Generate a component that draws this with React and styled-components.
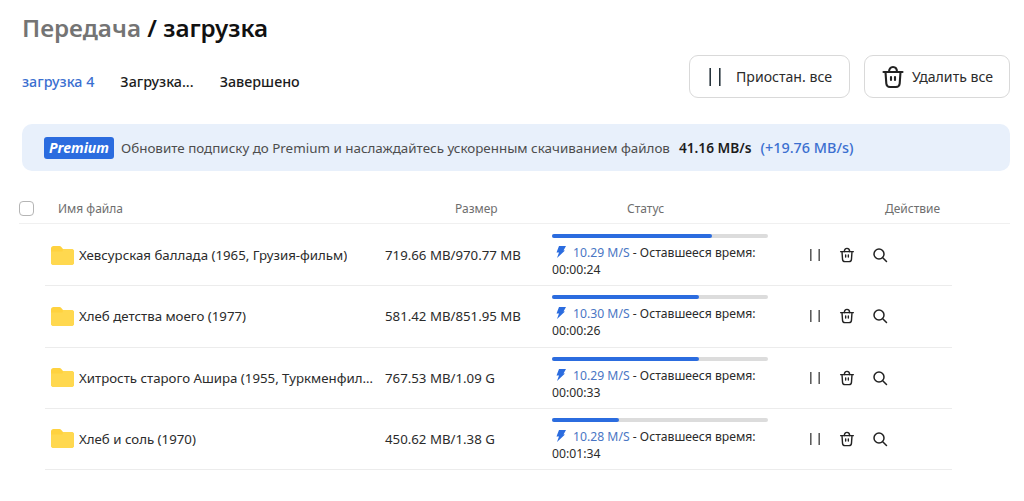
import styled, { createGlobalStyle } from 'styled-components'

const GlobalStyle = createGlobalStyle`
  html, body {
    margin: 0;
    padding: 0;
    background: #fff;
    overflow: hidden;
    font-family: "Noto Sans", "Open Sans", sans-serif;
    color: #1c1c1c;
  }
`

const Page = styled.div`
  width: 1024px;
  height: 501px;
  box-sizing: border-box;
  padding: 10px 14px 0 22px;
`

const Title = styled.h1`
  margin: 0;
  height: 34px;
  line-height: 35px;
  font-size: 24.2px;
  font-weight: 600;
  color: #111;
`

const TitleMuted = styled.span`
  color: #747474;
`

const Toolbar = styled.div`
  display: flex;
  justify-content: space-between;
  align-items: flex-start;
  margin-top: 11px;
  height: 42px;
`

const Tabs = styled.div`
  display: flex;
  gap: 26px;
  padding-top: 17px;
`

const Tab = styled.span`
  font-size: 14.3px;
  line-height: 20px;
  font-weight: 500;
  color: ${(p) => (p.$active ? '#3b6fd0' : '#1c1c1c')};
`

const Buttons = styled.div`
  display: flex;
  gap: 14px;
`

const Button = styled.button`
  display: flex;
  align-items: center;
  justify-content: center;
  gap: ${(p) => p.$gap}px;
  width: ${(p) => p.$width}px;
  height: 43px;
  padding: 0;
  background: #fff;
  border: 1px solid #d9d9d9;
  border-radius: 9px;
  font-family: inherit;
  font-size: 14.1px;
  color: #2b2b2b;
`

const Banner = styled.div`
  display: flex;
  align-items: center;
  height: 47px;
  margin-top: 27px;
  padding-left: 22px;
  background: #e8f0fb;
  border-radius: 10px;
  font-size: 13.4px;
  color: #4d4d4d;
`

const Badge = styled.span`
  width: 70px;
  height: 22px;
  line-height: 21px;
  text-align: center;
  border-radius: 3px;
  background: #2b6cdf;
  color: #fff;
  font-size: 14px;
  font-weight: 700;
  font-style: italic;
  margin-right: 7px;
`

const Speed = styled.span`
  margin-left: 9px;
  font-size: 13.7px;
  font-weight: 600;
  color: #1c1c1c;
`

const Bonus = styled.span`
  margin-left: 9px;
  font-size: 14.4px;
  font-weight: 500;
  color: #3b6fd0;
`

const HeadRow = styled.div`
  display: grid;
  grid-template-columns: 39px 397px 172px 258px auto;
  align-items: center;
  height: 53px;
  box-sizing: border-box;
  padding-top: 22px;
  margin-left: -3px;
  border-bottom: 1px solid #f0f0f0;
  font-size: 12px;
  color: #6e6e6e;
`

const Check = styled.span`
  width: 13px;
  height: 13px;
  border: 1.5px solid #b5b5b5;
  border-radius: 4px;
`

const List = styled.div`
  margin: 1px 0 0 23px;
  width: 907px;
`

const Row = styled.div`
  display: grid;
  grid-template-columns: 334px 167px 256px 1fr;
  align-items: center;
  height: 61.25px;
  box-sizing: border-box;
  border-bottom: 1px solid #ececec;
  padding-left: 6px;
  font-size: 13.25px;
  color: #2b2b2b;
`

const NameCell = styled.div`
  display: flex;
  align-items: center;
  gap: 5px;
  min-width: 0;
`

const FileName = styled.span`
  white-space: nowrap;
  overflow: hidden;
  text-overflow: ellipsis;
  max-width: 296px;
`

const StatusCell = styled.div`
  width: 216px;
  margin-top: 2px;
  font-size: 12.2px;
  line-height: 17px;
`

const Track = styled.div`
  height: 4px;
  border-radius: 2px;
  background: #dcdcdc;
  margin-bottom: 6px;
`

const Fill = styled.div`
  height: 100%;
  border-radius: 2px;
  background: #2b6cdf;
`

const Rate = styled.span`
  color: #4a76c4;
`

const Bolt = styled.svg`
  width: 11px;
  height: 12px;
  margin: 0 7px 0 3px;
  vertical-align: -1px;
`

const Actions = styled.div`
  display: flex;
  align-items: center;
  gap: 17px;
`

const PauseIcon = ({ size = 16, height = 20, color = '#555' }) => (
  <svg width={size} height={height} viewBox={`0 0 ${size} ${height}`} fill="none">
    <path d={`M${size * 0.2} 1V${height - 1}M${size * 0.8} 1V${height - 1}`} stroke={color} strokeWidth="1.5" />
  </svg>
)

const TrashIcon = ({ size = 16 }) => (
  <svg width={size} height={size} viewBox="0 0 24 24" fill="none" stroke="#222" strokeWidth="2.1" strokeLinecap="round" strokeLinejoin="round">
    <path d="M2.500 7h19" />
    <path d="M8 7c0-3 1.500-5 4-5s4 2 4 5" />
    <path d="M4.500 7l.8 11.500c.2 2 1.500 3.500 3.700 3.500h6c2.200 0 3.500-1.500 3.700-3.500L19.500 7" />
    <path d="M10 12v3M14 12v3" />
  </svg>
)

const SearchIcon = () => (
  <svg width="16" height="16" viewBox="0 0 16 16" fill="none" stroke="#222" strokeWidth="1.5" strokeLinecap="round">
    <circle cx="7" cy="7" r="5" />
    <path d="M11 11l3.500 3.500" />
  </svg>
)

const FolderIcon = () => (
  <svg width="23" height="19" viewBox="0 0 23 19">
    <path d="M0 2.500C0 1 1 0 2.500 0h6c.8 0 1.300.3 1.800.9L12 3h8.500C22 3 23 4 23 5.500v11c0 1.500-1 2.500-2.500 2.500h-18C1 19 0 18 0 16.500z" fill="#ffd23f" />
    <path d="M0 5.500h11.500L12 3h8.500C22 3 23 4 23 5.500v11c0 1.500-1 2.500-2.500 2.500h-18C1 19 0 18 0 16.500z" fill="#ffd84f" />
  </svg>
)

const downloads = [
  { name: 'Хевсурская баллада (1965, Грузия-фильм)', size: '719.66 MB/970.77 MB', rate: '10.29', left: '00:00:24', progress: 74 },
  { name: 'Хлеб детства моего (1977)', size: '581.42 MB/851.95 MB', rate: '10.30', left: '00:00:26', progress: 68 },
  { name: 'Хитрость старого Ашира (1955, Туркменфильм)', size: '767.53 MB/1.09 G', rate: '10.29', left: '00:00:33', progress: 68 },
  { name: 'Хлеб и соль (1970)', size: '450.62 MB/1.38 G', rate: '10.28', left: '00:01:34', progress: 31 },
]

const App = () => (
  <Page>
    <GlobalStyle />
    <Title><TitleMuted>Передача</TitleMuted> / загрузка</Title>
    <Toolbar>
      <Tabs>
        <Tab $active>загрузка 4</Tab>
        <Tab>Загрузка...</Tab>
        <Tab>Завершено</Tab>
      </Tabs>
      <Buttons>
        <Button $width={161} $gap={13}><PauseIcon size={16} height={20} color="#1d2a33" />Приостан. все</Button>
        <Button $width={146} $gap={7}><TrashIcon size={24} />Удалить все</Button>
      </Buttons>
    </Toolbar>
    <Banner>
      <Badge>Premium</Badge>
      Обновите подписку до Premium и наслаждайтесь ускоренным скачиванием файлов
      <Speed>41.16 MB/s</Speed>
      <Bonus>(+19.76 MB/s)</Bonus>
    </Banner>
    <HeadRow>
      <Check />
      <span>Имя файла</span>
      <span>Размер</span>
      <span>Статус</span>
      <span>Действие</span>
    </HeadRow>
    <List>
      {downloads.map((item) => (
        <Row key={item.name}>
          <NameCell>
            <FolderIcon />
            <FileName>{item.name}</FileName>
          </NameCell>
          <span>{item.size}</span>
          <StatusCell>
            <Track><Fill style={{ width: `${item.progress}%` }} /></Track>
            <Bolt viewBox="0 0 11 12"><path d="M4 0h7L8.500 4.500H10L2 12l2-5.500H1.500z" fill="#2b6cdf" /></Bolt>
            <Rate>{item.rate} M/S</Rate> - Оставшееся время: {item.left}
          </StatusCell>
          <Actions>
            <PauseIcon size={14} height={14} />
            <TrashIcon size={16} />
            <SearchIcon />
          </Actions>
        </Row>
      ))}
    </List>
  </Page>
)

export default App
